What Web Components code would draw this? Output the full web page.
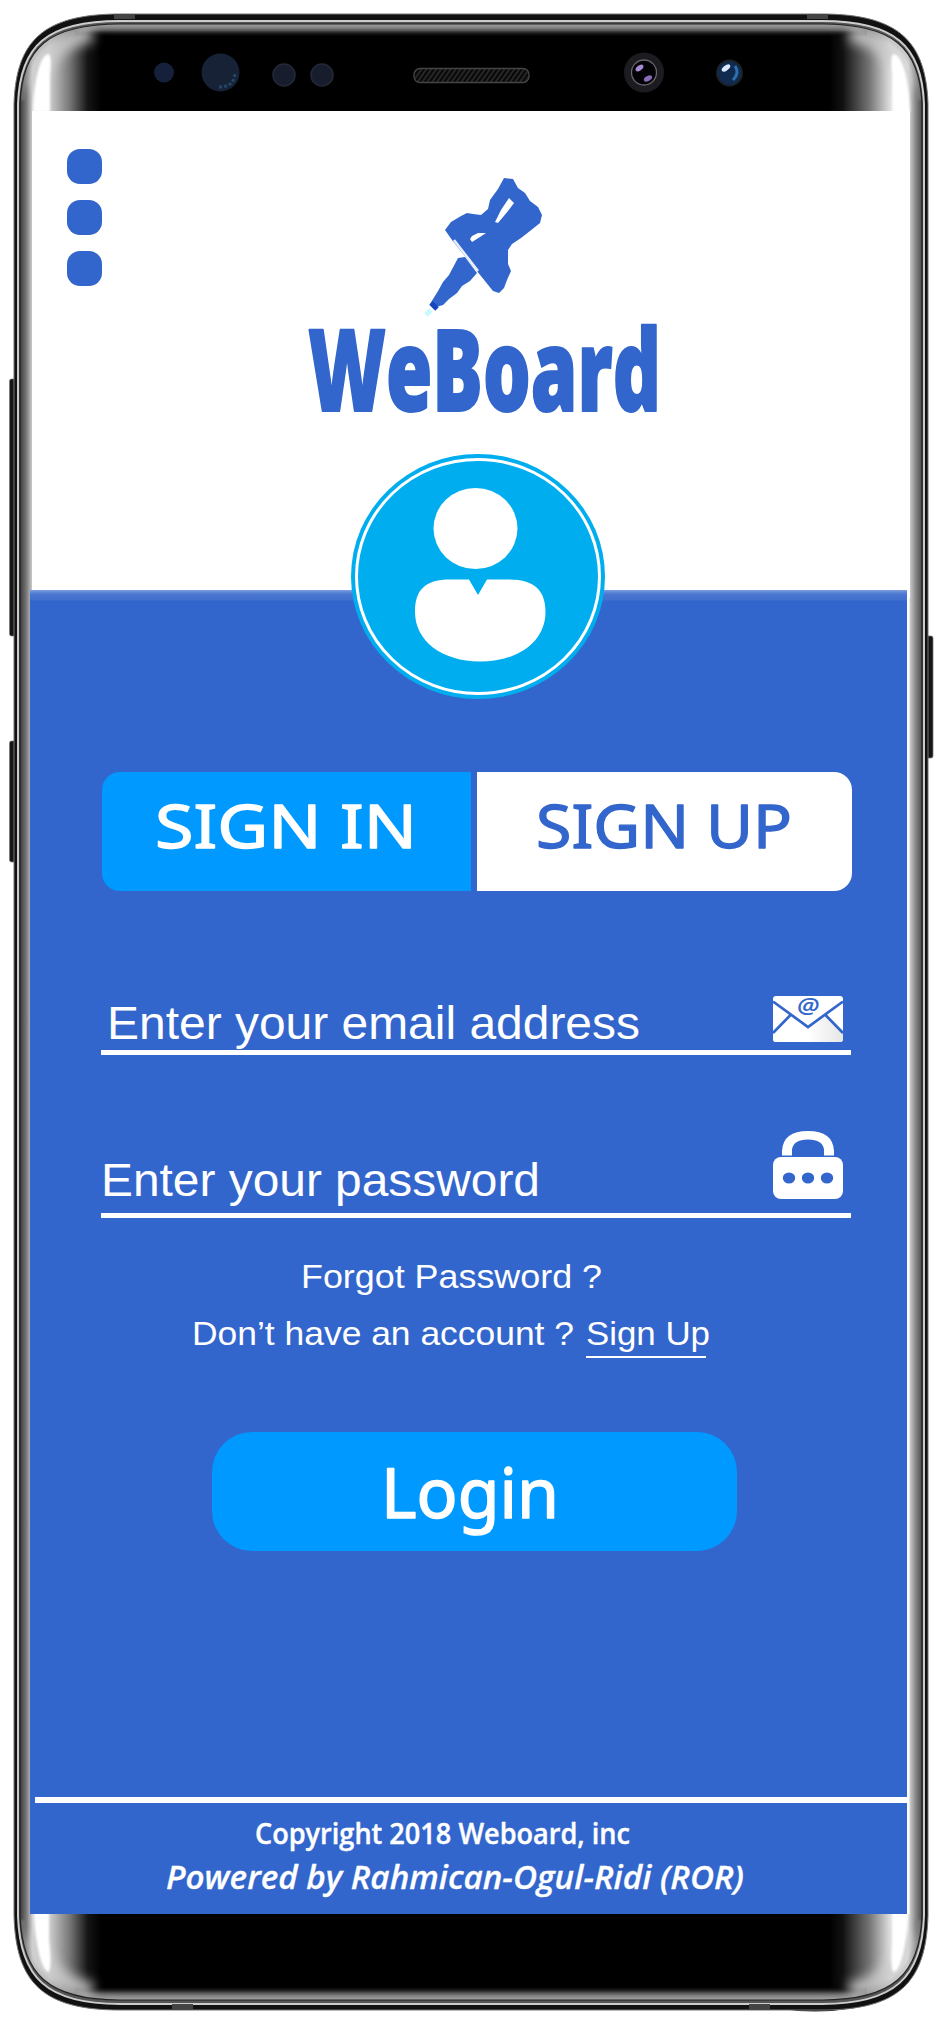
<!DOCTYPE html>
<html lang="en">
<head>
<meta charset="utf-8">
<title>WeBoard</title>
<style>
html,body{margin:0;background:#fff}
body{width:942px;height:2020px;overflow:hidden;font-family:"Liberation Sans",Arial,sans-serif}
</style>
</head>
<body>
<phone-frame>
  <app-header></app-header>
  <login-panel></login-panel>
  <app-footer></app-footer>
</phone-frame>
<script>
const define=(name,html)=>customElements.define(name,class extends HTMLElement{
  constructor(){super();this.attachShadow({mode:'open'}).innerHTML=html;}
});

/* Single text line stretched to a given ink width: w, h, size, base, weight, family, edge */
customElements.define('fit-text',class extends HTMLElement{
  connectedCallback(){
    const g=(n,d)=>this.getAttribute(n)||d;
    const w=g('w'),h=g('h');
    const root=this.shadowRoot||this.attachShadow({mode:'open'});
    root.innerHTML=`<style>:host{display:block;width:${w}px;height:${h}px;flex:none}svg{display:block;overflow:visible}
text{fill:currentColor;stroke:currentColor;stroke-width:${g('edge','0')};stroke-linejoin:round;stroke-linecap:round;font:${g('slant','normal')} ${g('weight','400')} ${g('size')}px ${g('family','"Liberation Sans",Arial,sans-serif')}}</style>
<svg width="${w}" height="${h}"><text x="0" y="${g('base')}" textLength="${w}" lengthAdjust="spacingAndGlyphs">${g('text')}</text></svg>`;
  }
});

define('phone-frame',`<style>
:host{display:block;position:relative;width:942px;height:2020px}
svg{position:absolute;inset:0}
.screen{position:relative;display:flex;flex-direction:column;box-sizing:border-box;height:1914px;padding:111px 35px 0 30px}
</style>
<svg width="942" height="2020" viewBox="0 0 942 2020">
<defs>
<linearGradient id="side" gradientUnits="userSpaceOnUse" x1="20" x2="924" y1="0" y2="0">
<stop offset="0" stop-color="#3c3c3c"/><stop offset=".007" stop-color="#777"/><stop offset=".014" stop-color="#d4d4d4"/><stop offset=".033" stop-color="#ccc"/><stop offset=".055" stop-color="#777"/><stop offset=".075" stop-color="#151515"/><stop offset=".09" stop-color="#000"/>
<stop offset=".895" stop-color="#000"/><stop offset=".91" stop-color="#111"/><stop offset=".94" stop-color="#777"/><stop offset=".962" stop-color="#ddd"/><stop offset=".982" stop-color="#e4e4e4"/><stop offset=".991" stop-color="#858585"/><stop offset="1" stop-color="#383838"/></linearGradient>
<linearGradient id="top" gradientUnits="userSpaceOnUse" x1="0" x2="0" y1="24" y2="37"><stop offset="0" stop-color="#aaa"/><stop offset=".5" stop-color="#555"/><stop offset="1" stop-color="#000" stop-opacity="0"/></linearGradient>
<linearGradient id="bot" gradientUnits="userSpaceOnUse" x1="0" x2="0" y1="2000" y2="1986"><stop offset="0" stop-color="#aaa"/><stop offset=".5" stop-color="#555"/><stop offset="1" stop-color="#000" stop-opacity="0"/></linearGradient>
<filter id="glow"><feGaussianBlur stdDeviation=".8"/></filter>
<filter id="haze" x="-50%" y="-50%" width="200%" height="200%"><feGaussianBlur stdDeviation="6"/></filter>
<clipPath id="in"><path id="inner" d="M20 104C22 48 48 24 120 24H822C893 24 920 48 922 104V1916C920 1974 893 2000 822 2000H120C48 2000 22 1974 20 1916Z"/></clipPath>
<pattern id="mesh" width="4" height="4" patternUnits="userSpaceOnUse" patternTransform="rotate(35)"><rect width="4" height="4" fill="#080808"/><path d="M1 0V4" stroke="#444"/></pattern>
</defs>
<g fill="#161616" stroke="#777" stroke-width=".7"><rect x="9.5" y="379" width="8" height="257" rx="2"/><rect x="9.5" y="741" width="8" height="121" rx="2"/><rect x="925" y="636" width="8" height="122" rx="2"/></g>
<path d="M775 2008Q815 2015 855 2008" fill="#222"/>
<path d="M14 104C16 42 42 14 120 14H822C899 14 926 42 928 104V1916C926 1982 899 2010 822 2010H120C42 2010 16 1982 14 1916Z" fill="#111" stroke="#777" stroke-width="1"/>
<path d="M18 104C20 46 46 21 120 21H822C895 21 922 46 924 104V1916C922 1977 895 2004 822 2004H120C46 2004 20 1977 18 1916Z" fill="#555" stroke="#ccc" stroke-width="2"/>
<g clip-path="url(#in)">
<rect x="18" y="20" width="906" height="1984" fill="url(#side)"/>
<rect x="75" y="24" width="792" height="13" fill="url(#top)"/><rect x="75" y="1986" width="792" height="14" fill="url(#bot)"/>
<path d="M20 100C22 48 48 24 120 24H822C893 24 920 48 922 100M20 1920C22 1974 48 2000 120 2000H822C893 2000 920 1974 922 1920" fill="none" stroke="#999" stroke-width="10" filter="url(#glow)" opacity=".35"/>
<path d="M36 88Q44 42 92 34M906 88Q898 42 850 34M36 1936Q44 1982 92 1990M906 1936Q898 1982 850 1990" fill="none" stroke="#ccc" stroke-width="16" filter="url(#haze)" opacity=".85"/>
<path d="M33 112C34 80 40 54 49 54Q52 57 50 76V112ZM910 112C909 80 903 54 893 54Q890 57 892 76V112ZM34 1912C35 1944 42 1972 49 1972Q52 1965 49 1940V1912ZM908 1912C907 1944 901 1972 893 1972Q890 1965 892 1940V1912Z" fill="#fff" filter="url(#glow)"/>
</g>
<use href="#inner" fill="none" stroke="#222" stroke-width="1.2"/>
<g fill="#444"><path d="M114 14h21v5h-21zM807 14h21v5h-21zM172 2004h21v6h-21zM749 2004h21v6h-21z"/></g>
<path d="M32 111H910V598H32Z" fill="#fff"/><path d="M907 590H909.5V1914H907Z" fill="#fff"/>
<circle cx="164" cy="72.5" r="10" fill="#15203a"/>
<circle cx="220.500" cy="72.500" r="19" fill="#172236"/><path d="M219 87Q235 87 235 72" fill="none" stroke="#28577e" stroke-width="3" stroke-dasharray="3 2" opacity=".7"/>
<g fill="#171d2d" stroke="#232936" stroke-width="1.5"><circle cx="284" cy="75" r="11"/><circle cx="322" cy="75" r="11"/></g>
<rect x="414" y="68.500" width="115" height="14" rx="6" fill="url(#mesh)" stroke="#444" stroke-width="1.3"/>
<circle cx="644" cy="72.500" r="20" fill="#1c1b20"/><circle cx="644" cy="72.500" r="12.500" fill="#030205" stroke="#68666c" stroke-width="1.3"/>
<ellipse cx="639.500" cy="68" rx="4.500" ry="2.500" fill="#a58ad5" transform="rotate(-38 639.5 68)"/><ellipse cx="648" cy="78.500" rx="4.500" ry="2.500" fill="#896bb8" transform="rotate(-30 648 78.500)"/>
<circle cx="729.500" cy="73" r="12.500" fill="#112b50" stroke="#1c2127" stroke-width="2"/><path d="M733 80Q740 73 735 66" stroke="#2d70b0" stroke-width="3" fill="none"/><ellipse cx="726" cy="68" rx="5" ry="2.500" fill="#dceaff" transform="rotate(-38 726 68)"/>
</svg>
<div class="screen"><slot></slot></div>`);

define('menu-dots',`<style>:host{display:flex;flex-direction:column;gap:16px;width:35px}i{height:35px;border-radius:13px;background:#36c}</style><i></i><i></i><i></i>`);

define('brand-logo',`<style>:host{display:block;width:352px;height:260px}svg{display:block;overflow:visible}
text{font:800 113px "Open Sans",sans-serif;fill:#36c;stroke:#36c;stroke-width:2;stroke-linejoin:round}</style>
<svg width="352" height="260" viewBox="306 160 352 260">
<defs><filter id="b"><feGaussianBlur stdDeviation=".65"/></filter></defs>
<g filter="url(#b)">
<path fill="#36c" d="M504 178L513 179L518 188L525 193L530 201L538 207L542 215L540 223L530 231L521 238L512 244L508 250L508 264L511 271L507 280L504 288L499 293L493 291L452 240L445 230L451 222L461 216L467 213L473 214L481 215L488 209L490 200L498 189Z"/>
<path fill="#36c" d="M458 258L465 257L477 273L470 281L462 286L457 293L449 299L443 305L433 308L430 304L438 291L443 282L449 275Z"/>
<path fill="#fff" d="M509 198L514 203L508 211L498 223L495 222L501 210ZM472 236L478 233L486 233L480 237L472 242L470 239Z"/>
<path stroke="#e9eefb" stroke-width="2.500" d="M454 240L478 271"/><path stroke="#1546be" stroke-width="5" d="M431 303l6 6"/><path stroke="#c9f8fd" stroke-width="5" d="M431 310l-5 5"/>
</g>
<text x="308" y="411" textLength="353" lengthAdjust="spacingAndGlyphs" filter="url(#b)">WeBoard</text>
</svg>`);

define('user-avatar',`<style>:host{display:block;width:254px;height:245px}svg{display:block}</style>
<svg width="254" height="245" viewBox="351 454 254 245"><ellipse cx="478" cy="576.500" rx="127" ry="122.500" fill="#00aef0"/><ellipse cx="478" cy="576.500" rx="121.500" ry="117" fill="none" stroke="#fff" stroke-width="3"/>
<ellipse cx="475.500" cy="528.500" rx="42" ry="40.500" fill="#fff"/><path d="M469 579.500L478 595L487 579.500H509C536 579.500 545.500 592 545.500 612C545.500 641 519 661.500 480 661.500C442 661.500 415 641 415 612C415 589 426 579.500 450 579.500Z" fill="#fff"/></svg>`);

define('app-header',`<style>:host{display:block;position:relative;height:479px;flex:none}
menu-dots{padding:38px 0 0 37px}
brand-logo{position:absolute;left:276px;top:49px}
user-avatar{position:absolute;z-index:1;left:321px;top:343px}</style>
<menu-dots></menu-dots><brand-logo></brand-logo><user-avatar></user-avatar>`);

define('auth-tabs',`<style>:host{display:flex;gap:6px;width:750px;height:119px;margin-left:1px}
div{display:flex;box-sizing:border-box}
.in{width:369px;background:#09f;color:#fff;border-radius:18px 0 0 18px;padding-left:53px}
.up{width:375px;background:#fff;color:#36c;border-radius:0 18px 18px 0;padding-left:59px}</style>
<div class="in"><fit-text text="SIGN IN" w="262" h="119" size="60" base="76" edge="1.300" family="'Noto Sans',sans-serif"></fit-text></div>
<div class="up"><fit-text text="SIGN UP" w="256" h="119" size="60" base="76" edge="1.300" family="'Noto Sans',sans-serif"></fit-text></div>`);

define('field-row',`<style>:host{display:flex;box-sizing:border-box;justify-content:space-between;align-items:flex-end;width:750px;border-bottom:5px solid #fff;padding-right:8px;color:#fff}</style><slot></slot>`);

define('mail-icon',`<style>:host{display:block;width:70px;height:46px;margin-bottom:8px}svg{display:block;overflow:visible}text{font:italic 600 21px "Open Sans",sans-serif;fill:#36c}</style>
<svg width="70" height="46"><defs><linearGradient id="g"><stop offset=".5" stop-color="#fff"/><stop offset="1" stop-color="#e6e6e6"/></linearGradient></defs>
<rect width="70" height="46" rx="3" fill="#fff"/><path d="M0 38L18 20L35 32L53 20L70 38V43Q70 46 67 46H3Q0 46 0 43Z" fill="url(#g)"/>
<path d="M0 5.500L35 31L70 5.500M0 37L18 18.500M70 37L52 18.500" fill="none" stroke="#36c" stroke-width="2.700"/><text x="24" y="18" textLength="22" lengthAdjust="spacingAndGlyphs">@</text></svg>`);

define('lock-icon',`<style>:host{display:block;width:70px;height:68px;margin-bottom:14px}svg{display:block}</style>
<svg width="70" height="68"><path d="M9 24.500V20Q10 0 35 0Q60 0 61 20V24.500H51V19Q50 8.500 35 8.500Q20 8.500 19 19V24.500Z" fill="#fff"/><rect y="26" width="70" height="42" rx="8" fill="#fff"/><g fill="#36c"><ellipse cx="16" cy="47" rx="6.200" ry="5.500"/><ellipse cx="35" cy="47" rx="6.200" ry="5.500"/><ellipse cx="54" cy="47" rx="6.200" ry="5.500"/></g></svg>`);

define('login-button',`<style>:host{display:flex;width:525px;height:119px;border-radius:40px;background:#09f;color:#fff;box-sizing:border-box;padding-left:169px}</style>
<fit-text text="Login" w="178" h="119" size="70" base="86" edge="1.500" family="'Noto Sans',sans-serif"></fit-text>`);

define('login-panel',`<style>
:host{display:flex;flex-direction:column;box-sizing:border-box;height:1207px;flex:none;color:#fff;background:linear-gradient(#7f9fdf 0,#5580d4 3px,#4875d0 5px,#4170cd 10px,#36c 11px);padding:182px 0 0 71px}
.mail{margin-top:105px}.mail,.pass{flex:none}
field-row.mail{height:59px}field-row.pass{height:87px;margin-top:76px}
.forgot{margin:34px 0 0 200px}.join{display:flex;gap:12px;margin:17px 0 0 91px}
.up{border-bottom:2px solid #fff;width:120px;height:47px}
login-button{margin:74px 0 0 111px}
</style>
<auth-tabs></auth-tabs>
<field-row class="mail"><fit-text style="margin-left:6px" text="Enter your email address" w="533" h="54" size="46" base="43"></fit-text><mail-icon></mail-icon></field-row>
<field-row class="pass"><fit-text text="Enter your password" w="439" h="54" size="46" base="37"></fit-text><lock-icon></lock-icon></field-row>
<fit-text class="forgot" text="Forgot Password ?" w="301" h="40" size="34" base="36"></fit-text>
<div class="join"><fit-text text="Don’t have an account ?" w="382" h="47" size="34" base="36"></fit-text><div class="up"><fit-text text="Sign Up" w="124" h="47" size="34" base="36"></fit-text></div></div>
<login-button></login-button>`);

define('app-footer',`<style>:host{display:flex;flex-direction:column;height:117px;flex:none;background:#36c;color:#fff}
hr{height:6px;width:872px;margin:0 0 0 5px;border:0;background:#fff;flex:none}
.copy{margin:13px 0 0 225px}.power{margin:4px 0 0 136px}</style><hr>
<fit-text class="copy" text="Copyright 2018 Weboard, inc" w="375" h="38" size="28" base="28" weight="600" edge=".4" family="'Open Sans',sans-serif"></fit-text>
<fit-text class="power" text="Powered by Rahmican-Ogul-Ridi (ROR)" w="578" h="44" size="33" base="31" weight="600" slant="italic" edge=".3" family="'Open Sans',sans-serif"></fit-text>`);
</script>
</body>
</html>
